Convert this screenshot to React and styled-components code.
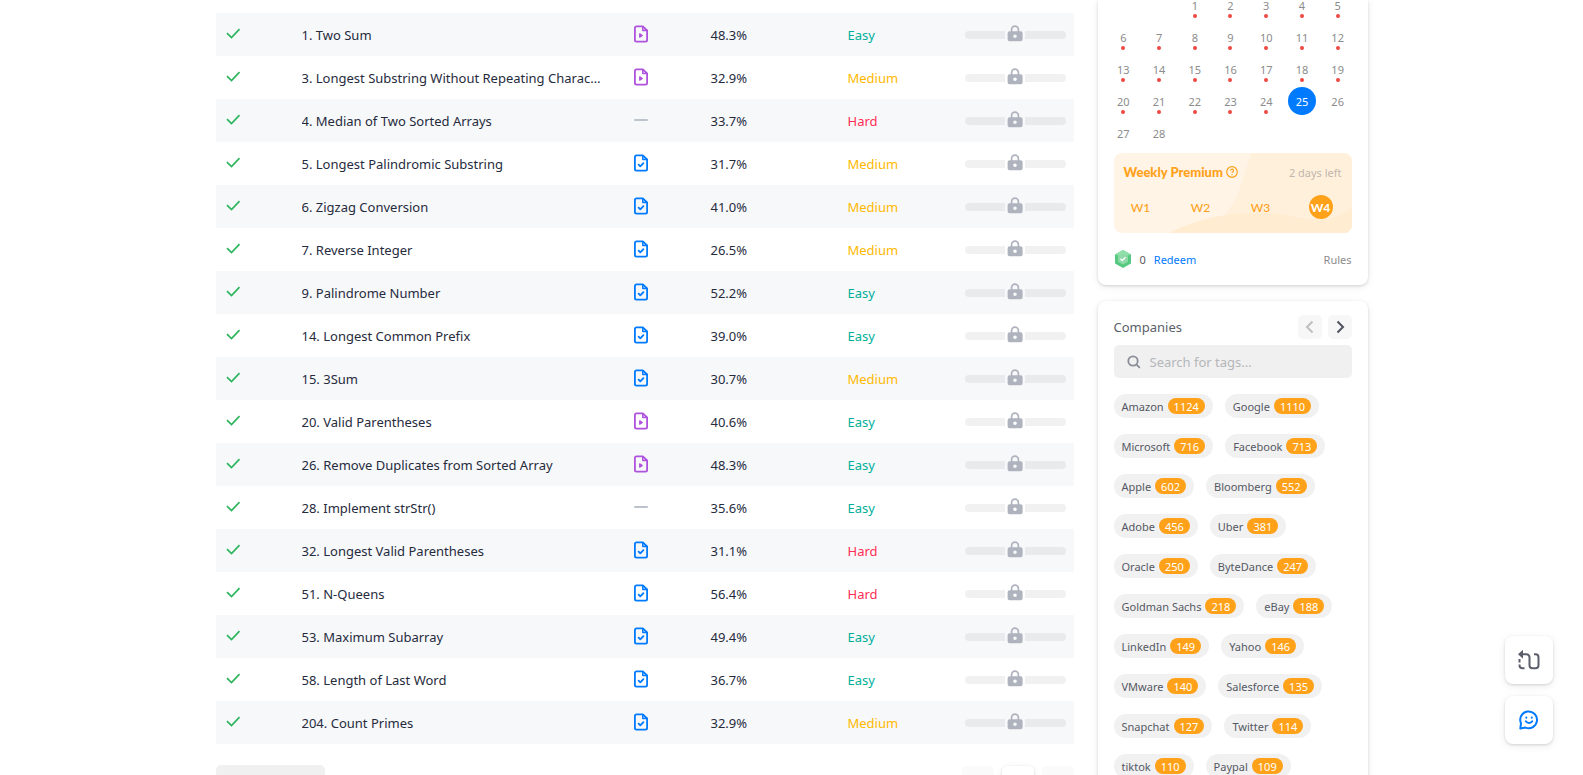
import React from 'react';
import styled, { createGlobalStyle } from 'styled-components';

const GlobalStyle = createGlobalStyle`
  *, *::before, *::after { box-sizing: border-box; }
  body {
    margin: 0;
    background: #fff;
    color: #262626;
    font-family: "Noto Sans", "Open Sans", sans-serif;
    font-size: 13px;
  }
  button, input { font: inherit; }
  button { border: 0; padding: 0; cursor: pointer; }
  svg { display: block; }
`;

const Page = styled.div`
  height: 100vh;
  overflow: hidden;
`;

const Layout = styled.div`
  display: grid;
  grid-template-columns: minmax(0, 1fr) 270px;
  gap: 24px;
  max-width: 1200px;
  margin: 0 auto;
  padding: 0 24px;
`;

const Main = styled.main`
  padding-top: 13px;
`;

const Table = styled.table`
  width: 100%;
  table-layout: fixed;
  border-collapse: collapse;
`;

const Col = styled.col`
  width: ${(p) => p.$w}px;
`;

const Row = styled.tr`
  height: 43px;
  background: ${(p) => (p.$odd ? '#f7f8fa' : '#fff')};
`;

const Cell = styled.td`
  padding: 0 8px;
  white-space: nowrap;
  color: ${(p) => p.$color || '#262b3d'};
`;

const TitleCell = styled(Cell)`
  overflow: hidden;
`;

const TitleLink = styled.a`
  display: block;
  max-width: 302px;
  overflow: hidden;
  text-overflow: ellipsis;
  color: inherit;
  text-decoration: none;
`;

const IconBox = styled.div`
  padding-bottom: 2px;
`;

const Frequency = styled.div`
  display: flex;
  align-items: center;
  gap: 2px;
`;

const Track = styled.span`
  flex: 1;
  height: 8px;
  background: rgba(0, 0, 0, 0.055);
  border-radius: ${(p) => (p.$end ? '0 4px 4px 0' : '4px 0 0 4px')};
`;

const LockBox = styled.span`
  padding-bottom: 3px;
`;

const Footer = styled.div`
  display: flex;
  justify-content: space-between;
  padding-top: 21px;
`;

const PageSize = styled.button`
  width: 109px;
  height: 32px;
  border-radius: 5px;
  background: #f0f0f0;
`;

const Pager = styled.nav`
  display: flex;
  gap: 8px;
`;

const PageButton = styled.button`
  width: 32px;
  height: 32px;
  margin-top: 1px;
  border-radius: 5px;
  background: ${(p) => (p.$active ? '#fff' : '#fafafa')};
  box-shadow: ${(p) => (p.$active ? '0 1px 3px rgba(0,0,0,.14), 0 2px 8px rgba(0,0,0,.06)' : 'none')};
`;

const Side = styled.aside`
  display: flex;
  flex-direction: column;
  gap: 16px;
`;

const Card = styled.section`
  background: #fff;
  border-radius: ${(p) => (p.$flush ? '0 0 8px 8px' : '8px')};
  box-shadow: 0 1px 3px rgba(0, 0, 0, 0.14), 0 2px 8px rgba(0, 0, 0, 0.07);
`;

const Calendar = styled.div`
  display: grid;
  grid-template-columns: repeat(7, 1fr);
  row-gap: 4px;
  margin-top: -9px;
  padding: 0 12px 0 8px;
`;

const Day = styled.div`
  position: relative;
  display: flex;
  align-items: center;
  justify-content: center;
  width: 28px;
  height: 28px;
  margin: 0 auto;
  border-radius: 50%;
  font-size: 11px;
  color: ${(p) => (p.$today ? '#fff' : '#8c8c8c')};
  background: ${(p) => (p.$today ? '#007aff' : 'transparent')};
`;

const Dot = styled.span`
  position: absolute;
  bottom: 1px;
  left: 12px;
  width: 4px;
  height: 4px;
  border-radius: 50%;
  background: #ef4743;
`;

const Premium = styled.div`
  position: relative;
  height: 80px;
  margin: 6px 16px 0;
  padding: 8px 10px 0;
  border-radius: 8px;
  overflow: hidden;
  background: #fff4e5;
  color: #ffa119;
  font-family: Lato, sans-serif;
`;

const Waves = styled.svg`
  position: absolute;
  inset: 0;
  width: 100%;
  height: 100%;
`;

const PremiumHead = styled.div`
  position: relative;
  display: flex;
  align-items: center;
  height: 22px;
  gap: 3px;
  font-size: 13px;
  font-weight: 900;
`;

const DaysLeft = styled.span`
  margin-left: auto;
  font: 11px "Noto Sans", sans-serif;
  color: #bfb7ac;
`;

const Weeks = styled.div`
  position: relative;
  display: flex;
  justify-content: space-between;
  padding: 12px 9px 0 5px;
`;

const Week = styled.span`
  display: flex;
  align-items: center;
  justify-content: center;
  width: 24px;
  height: 24px;
  border-radius: 50%;
  font-size: 12px;
  font-weight: ${(p) => (p.$on ? 700 : 500)};
  color: ${(p) => (p.$on ? '#fff' : '#ffa119')};
  background: ${(p) => (p.$on ? '#ffa119' : 'transparent')};
`;

const Coins = styled.div`
  display: flex;
  align-items: center;
  gap: 8px;
  height: 52px;
  padding: 0 16px;
  font-size: 11px;
  color: #595959;
`;

const CoinLink = styled.a`
  text-decoration: none;
  color: ${(p) => (p.$muted ? '#8c8c8c' : '#007aff')};
  margin-left: ${(p) => (p.$muted ? 'auto' : '0')};
`;

const Companies = styled(Card)`
  padding: 14px 16px;
`;

const CompaniesHead = styled.div`
  display: flex;
  align-items: center;
  gap: 6px;
  height: 24px;
`;

const Heading = styled.h2`
  flex: 1;
  margin: 0;
  font-size: 13px;
  font-weight: 400;
  color: #5c5f6b;
`;

const Arrow = styled.button`
  display: flex;
  align-items: center;
  justify-content: center;
  width: 24px;
  height: 24px;
  border-radius: 5px;
  background: #f7f7f7;
  color: ${(p) => (p.disabled ? '#bfbfbf' : '#50525f')};
`;

const Search = styled.label`
  display: flex;
  align-items: center;
  gap: 9px;
  height: 33px;
  margin-top: 6px;
  padding: 0 12px 0 13px;
  border-radius: 5px;
  background: #f0f0f0;
`;

const SearchInput = styled.input`
  flex: 1;
  min-width: 0;
  padding: 0;
  border: 0;
  outline: 0;
  background: none;
  color: #262626;
  &::placeholder { color: #b5b6ba; opacity: 1; }
`;

const Tags = styled.div`
  display: flex;
  flex-wrap: wrap;
  gap: 16px 12px;
  margin-top: 16px;
`;

const Tag = styled.a`
  display: flex;
  align-items: center;
  gap: 4px;
  height: 24px;
  padding: 0 8px;
  border-radius: 12px;
  background: #f1f1f1;
  color: #555864;
  font-size: 11px;
  text-decoration: none;
`;

const Count = styled.span`
  display: flex;
  align-items: center;
  height: 16px;
  padding: 0 6px;
  border-radius: 8px;
  background: #ffa119;
  color: #fff;
  font-size: 11px;
`;

const Floating = styled.div`
  position: fixed;
  right: 30px;
  bottom: 31px;
  display: flex;
  flex-direction: column;
  gap: 12px;
`;

const FloatButton = styled.button`
  display: flex;
  align-items: center;
  justify-content: center;
  width: 48px;
  height: 48px;
  border-radius: 8px;
  background: #fff;
  box-shadow: 0 1px 3px rgba(0, 0, 0, 0.14), 0 2px 8px rgba(0, 0, 0, 0.08);
`;

const Check = () => (
  <svg width="18" height="18" viewBox="0 0 18 18" fill="none" stroke="#2db55d" strokeWidth="1.7" aria-label="Solved">
    <path d="M3 8.200l4.500 4.300L15.500 4.200" />
  </svg>
);

const DocIcon = ({ video }) => (
  <svg width="18" height="18" viewBox="0 0 18 18" fill="none" stroke={video ? '#af52de' : '#007aff'} strokeWidth="1.8" strokeLinejoin="round" strokeLinecap="round">
    <path d="M4.500 1.300h6.300l4.300 4.200v9.600a1.600 1.600 0 0 1-1.600 1.600h-9a1.600 1.600 0 0 1-1.600-1.600V2.900a1.600 1.600 0 0 1 1.600-1.600z" />
    <path d="M10.800 1.800v3.700h4" strokeWidth="1.5" />
    {video ? <path d="M7.700 8.800v3.400l2.600-1.700z" fill="#af52de" strokeWidth="1.2" /> : <path d="M6.600 10.600l1.700 1.700 3.100-3.200" />}
  </svg>
);

const Dash = () => (
  <svg width="18" height="18" viewBox="0 0 18 18" fill="#bcc3cb"><rect x="2" y="8" width="14" height="2" rx="1" /></svg>
);

const Lock = () => (
  <svg width="16" height="17" viewBox="0 0 16 17" fill="none">
    <path d="M4.600 7V4.600a3.400 3.400 0 0 1 6.800 0V7" stroke="#afb3be" strokeWidth="1.700" />
    <path fill="#afb3be" fillRule="evenodd" d="M2.500 6.300h11A2 2 0 0 1 15.600 8.300v6a2 2 0 0 1-2 2h-11a2 2 0 0 1-2-2v-6a2 2 0 0 1 2-2zM8 9.500a1.800 1.800 0 1 0 0 3.600 1.800 1.800 0 0 0 0-3.600z" />
  </svg>
);

const problems = [
  ['1. Two Sum', 'v', '48.3%', 'Easy'],
  ['3. Longest Substring Without Repeating Characters', 'v', '32.9%', 'Medium'],
  ['4. Median of Two Sorted Arrays', '', '33.7%', 'Hard'],
  ['5. Longest Palindromic Substring', 'd', '31.7%', 'Medium'],
  ['6. Zigzag Conversion', 'd', '41.0%', 'Medium'],
  ['7. Reverse Integer', 'd', '26.5%', 'Medium'],
  ['9. Palindrome Number', 'd', '52.2%', 'Easy'],
  ['14. Longest Common Prefix', 'd', '39.0%', 'Easy'],
  ['15. 3Sum', 'd', '30.7%', 'Medium'],
  ['20. Valid Parentheses', 'v', '40.6%', 'Easy'],
  ['26. Remove Duplicates from Sorted Array', 'v', '48.3%', 'Easy'],
  ['28. Implement strStr()', '', '35.6%', 'Easy'],
  ['32. Longest Valid Parentheses', 'd', '31.1%', 'Hard'],
  ['51. N-Queens', 'd', '56.4%', 'Hard'],
  ['53. Maximum Subarray', 'd', '49.4%', 'Easy'],
  ['58. Length of Last Word', 'd', '36.7%', 'Easy'],
  ['204. Count Primes', 'd', '32.9%', 'Medium'],
];

const levelColor = { Easy: '#00af9b', Medium: '#ffb800', Hard: '#ff2d55' };

const companies = [
  ['Amazon', 1124], ['Google', 1110], ['Microsoft', 716], ['Facebook', 713],
  ['Apple', 602], ['Bloomberg', 552], ['Adobe', 456], ['Uber', 381],
  ['Oracle', 250], ['ByteDance', 247], ['Goldman Sachs', 218], ['eBay', 188],
  ['LinkedIn', 149], ['Yahoo', 146], ['VMware', 140], ['Salesforce', 135],
  ['Snapchat', 127], ['Twitter', 114], ['tiktok', 110], ['Paypal', 109],
];

const TODAY = 25;
const days = [null, null, ...Array.from({ length: 28 }, (_, i) => i + 1)];

export default function App() {
  return (
    <Page>
      <GlobalStyle />
      <Layout>
        <Main>
          <Table>
            <colgroup>
              <Col $w={78} /><col /><Col $w={79} /><Col $w={137} /><Col $w={117} /><Col $w={117} />
            </colgroup>
            <tbody>
              {problems.map(([title, kind, rate, level], i) => (
                <Row key={title} $odd={i % 2 === 0}>
                  <Cell><IconBox><Check /></IconBox></Cell>
                  <TitleCell><TitleLink href="#">{title}</TitleLink></TitleCell>
                  <Cell><IconBox>{kind ? <DocIcon video={kind === 'v'} /> : <Dash />}</IconBox></Cell>
                  <Cell>{rate}</Cell>
                  <Cell $color={levelColor[level]}>{level}</Cell>
                  <Cell>
                    <Frequency><Track /><LockBox><Lock /></LockBox><Track $end /></Frequency>
                  </Cell>
                </Row>
              ))}
            </tbody>
          </Table>
          <Footer>
            <PageSize aria-label="Page size" />
            <Pager>
              <PageButton aria-label="Previous page" />
              <PageButton $active aria-label="Current page" />
              <PageButton aria-label="Next page" />
            </Pager>
          </Footer>
        </Main>
        <Side>
          <Card $flush>
            <Calendar>
              {days.map((d, i) => (
                <Day key={i} $today={d === TODAY}>
                  {d}
                  {d && d < TODAY && <Dot />}
                </Day>
              ))}
            </Calendar>
            <Premium>
              <Waves viewBox="0 0 238 80" preserveAspectRatio="none">
                <path d="M138 0C128 22 128 42 112 60C104 70 96 76 86 80H238V0z" fill="#fff0dc" />
                <path d="M55 80C90 62 130 57 165 61C195 66 212 74 238 55V80z" fill="#ffecd1" />
              </Waves>
              <PremiumHead>
                Weekly Premium
                <svg width="12" height="12" viewBox="0 0 12 12" fill="none" stroke="#ffa119" strokeWidth="1.2">
                  <circle cx="6" cy="6" r="5.3" />
                  <path d="M4.500 4.800a1.500 1.500 0 1 1 2.300 1.200c-.5.3-.8.500-.8 1M6 8.200v1" />
                </svg>
                <DaysLeft>2 days left</DaysLeft>
              </PremiumHead>
              <Weeks>
                <Week>W1</Week><Week>W2</Week><Week>W3</Week><Week $on>W4</Week>
              </Weeks>
            </Premium>
            <Coins>
              <svg width="18" height="18" viewBox="0 0 18 18">
                <path d="M9 0l8 4.500v9L9 18l-8-4.500v-9z" fill="#56c980" />
                <path d="M9 0l8 4.500L9 7 1 4.500z" fill="#8fe0ab" />
                <path d="M9 3.500l5 2.800v5.500l-5 2.800-5-2.800V6.300z" fill="#8ed9a8" />
                <path d="M6.500 8.800l1.800 1.700 3.200-3.200" fill="none" stroke="#fff" strokeWidth="1.300" />
              </svg>
              <span>0</span>
              <CoinLink href="#">Redeem</CoinLink>
              <CoinLink href="#" $muted>Rules</CoinLink>
            </Coins>
          </Card>
          <Companies>
            <CompaniesHead>
              <Heading>Companies</Heading>
              <Arrow disabled aria-label="Previous">
                <svg width="12" height="14" viewBox="0 0 12 14" fill="none" stroke="currentColor" strokeWidth="2"><path d="M8.500 1.500L3 7l5.500 5.500" /></svg>
              </Arrow>
              <Arrow aria-label="Next">
                <svg width="12" height="14" viewBox="0 0 12 14" fill="none" stroke="currentColor" strokeWidth="2"><path d="M3.500 1.500L9 7l-5.500 5.500" /></svg>
              </Arrow>
            </CompaniesHead>
            <Search>
              <svg width="14" height="14" viewBox="0 0 14 14" fill="none" stroke="#8a8d98" strokeWidth="1.800">
                <circle cx="6" cy="6" r="4.700" /><path d="M9.300 9.300l3.500 3.500" />
              </svg>
              <SearchInput aria-label="Search for tags" placeholder="Search for tags..." />
            </Search>
            <Tags>
              {companies.map(([name, count]) => (
                <Tag href="#" key={name}>{name}<Count>{count}</Count></Tag>
              ))}
            </Tags>
          </Companies>
        </Side>
      </Layout>
      <Floating>
        <FloatButton aria-label="Switch view">
          <svg width="24" height="24" viewBox="0 0 24 24" fill="none" stroke="#5c5f6b" strokeWidth="2">
            <path d="M5 6.300h4.500a3 3 0 0 1 3 3v8a3 3 0 0 0 3 3h3a3 3 0 0 0 3-3v-8a3 3 0 0 0-3-3H17" />
            <path d="M2.500 11v3.500M2.500 16.500v.8a3 3 0 0 0 3 3h2" />
            <path d="M1 6.300l5-4.500v9z" fill="#5c5f6b" stroke="none" />
          </svg>
        </FloatButton>
        <FloatButton aria-label="Feedback">
          <svg width="20" height="20" viewBox="0 0 20 20" fill="none" stroke="#007aff" strokeWidth="2" strokeLinejoin="round" strokeLinecap="round">
            <path d="M1.300 18.600l.7-5.300A8.400 8.400 0 1 1 6.500 17.600z" />
            <path d="M6.800 11.300c1.500 2.200 5 2.200 6.500 0M7.300 7.400v.3M12.800 7.400v.3" />
          </svg>
        </FloatButton>
      </Floating>
    </Page>
  );
}
